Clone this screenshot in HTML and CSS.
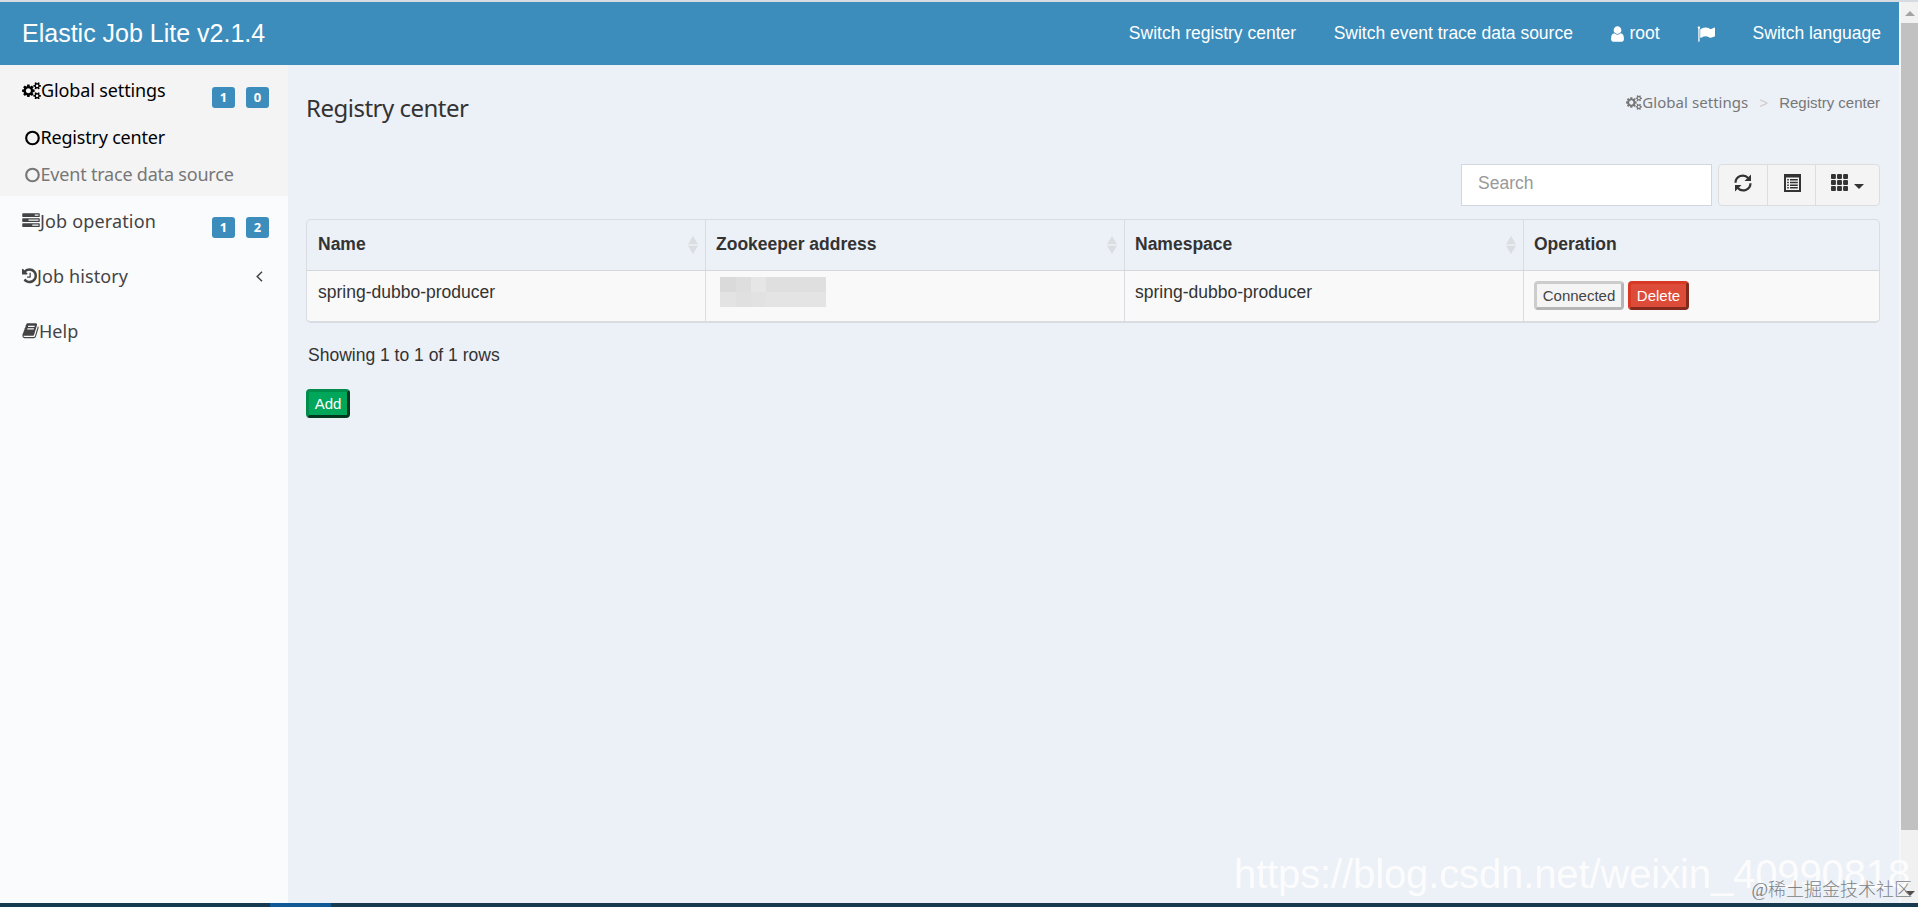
FILE: index.html
```
<!DOCTYPE html>
<html lang="en">
<head>
<meta charset="utf-8">
<title>Elastic Job Lite</title>
<link rel="stylesheet" href="styles.css">
</head>
<body>
<svg class="defs" width="0" height="0">
  <symbol id="cogs" viewBox="0 0 1920 1792"><path d="M896 896q0-106-75-181t-181-75-181 75-75 181 75 181 181 75 181-75 75-181zm768 512q0-52-38-90t-90-38-90 38-38 90q0 53 37.500 90.500t90.500 37.500 90.500-37.500 37.500-90.500zm0-1024q0-52-38-90t-90-38-90 38-38 90q0 53 37.500 90.500t90.500 37.500 90.500-37.500 37.500-90.500zm-384 421v185q0 10-7 19.500t-16 10.500l-155 24q-11 35-32 76 34 48 90 115 7 11 7 20 0 12-7 19-23 30-82.500 89.500t-78.500 59.500q-11 0-21-7l-115-90q-37 19-77 31-11 108-23 155-7 24-30 24h-186q-11 0-20-7.500t-10-17.500l-23-153q-34-10-75-31l-118 89q-7 7-20 7-11 0-21-8-144-133-144-160 0-9 7-19 10-14 41-53t47-61q-23-44-35-82l-152-24q-10-1-17-9.500t-7-19.500v-185q0-10 7-19.500t16-10.500l155-24q11-35 32-76-34-48-90-115-7-11-7-20 0-12 7-20 22-30 82-89t79-59q11 0 21 7l115 90q34-18 77-32 11-108 23-154 7-24 30-24h186q11 0 20 7.500t10 17.500l23 153q34 10 75 31l118-89q8-7 20-7 11 0 21 8 144 133 144 160 0 8-7 19-12 16-42 54t-45 60q23 48 34 82l152 23q10 2 17 10.500t7 19.500zm640 533v140q0 16-149 31-12 27-30 52 51 113 51 138 0 4-4 7-122 71-124 71-8 0-46-47t-52-68q-20 2-30 2t-30-2q-14 21-52 68t-46 47q-2 0-124-71-4-3-4-7 0-25 51-138-18-25-30-52-149-15-149-31v-140q0-16 149-31 13-29 30-52-51-113-51-138 0-4 4-7 4-2 35-20t59-34 30-16q8 0 46 46.500t52 67.500q20-2 30-2t30 2q51-71 92-112l6-2q4 0 124 70 4 3 4 7 0 25-51 138 17 23 30 52 149 15 149 31zm0-1024v140q0 16-149 31-12 27-30 52 51 113 51 138 0 4-4 7-122 71-124 71-8 0-46-47t-52-68q-20 2-30 2t-30-2q-14 21-52 68t-46 47q-2 0-124-71-4-3-4-7 0-25 51-138-18-25-30-52-149-15-149-31v-140q0-16 149-31 13-29 30-52-51-113-51-138 0-4 4-7 4-2 35-20t59-34 30-16q8 0 46 46.500t52 67.500q20-2 30-2t30 2q51-71 92-112l6-2q4 0 124 70 4 3 4 7 0 25-51 138 17 23 30 52 149 15 149 31z"/></symbol>
  <symbol id="tasks" viewBox="0 0 1792 1792"><path d="M1024 1408h640v-128h-640v128zm-384-512h1024v-128h-1024v128zm640-512h384v-128h-384v128zm512 832v256q0 26-19 45t-45 19h-1664q-26 0-45-19t-19-45v-256q0-26 19-45t45-19h1664q26 0 45 19t19 45zm0-512v256q0 26-19 45t-45 19h-1664q-26 0-45-19t-19-45v-256q0-26 19-45t45-19h1664q26 0 45 19t19 45zm0-512v256q0 26-19 45t-45 19h-1664q-26 0-45-19t-19-45v-256q0-26 19-45t45-19h1664q26 0 45 19t19 45z"/></symbol>
  <symbol id="history" viewBox="128 0 1536 1792"><path d="M1664 896q0 156-61 298t-164 245-245 164-298 61q-172 0-327-72.500t-264-204.500q-7-10-6.500-22.500t8.500-20.500l137-138q10-9 25-9 16 2 23 12 73 95 179 147t225 52q104 0 198.500-40.500t163.500-109.500 109.500-163.500 40.500-198.500-40.500-198.500-109.500-163.500-163.500-109.500-198.500-40.500q-98 0-188 35.500t-160 101.500l137 138q31 30 14 69-17 40-59 40h-448q-26 0-45-19t-19-45v-448q0-42 40-59 39-17 69 14l130 129q107-101 244.500-156.500t284.500-55.500q156 0 298 61t245 164 164 245 61 298zm-640-288v448q0 14-9 23t-23 9h-320q-14 0-23-9t-9-23v-64q0-14 9-23t23-9h224v-352q0-14 9-23t23-9h64q14 0 23 9t9 23z"/></symbol>
  <symbol id="book" viewBox="64 0 1664 1792"><path d="M1703 478q40 57 18 129l-275 906q-19 64-76.500 107.500t-122.500 43.500h-923q-77 0-148.500-53.500t-99.500-131.500q-24-67-2-127 0-4 3-27t4-37q1-8-3-21.500t-3-19.500q2-11 8-21t16.500-23.500 16.500-23.500q23-38 45-91.500t30-91.500q3-10 .5-30t-.5-28q3-11 17-28t17-23q21-36 42-92t25-90q1-9-2.500-32t.5-28q4-13 22-30.500t22-22.500q19-26 42.500-84.500t27.500-96.500q1-8-3-25.500t-2-26.500q2-8 9-18t18-23 17-21q8-12 16.500-30.500t15-35 16-36 19.500-32 26.500-23.500 36-11.500 47.500 5.500l-1 3q38-9 51-9h761q74 0 114 56t18 130l-274 906q-36 119-71.500 153.500t-128.500 34.500h-869q-27 0-38 15-11 16-1 43 24 70 144 70h923q29 0 56-15.500t35-41.500l300-987q7-22 5-57 38 15 59 43zm-1064 2q-4 13 2 22.500t20 9.500h608q13 0 25.500-9.500t16.500-22.500l21-64q4-13-2-22.500t-20-9.500h-608q-13 0-25.500 9.500t-16.500 22.500zm-83 256q-4 13 2 22.500t20 9.500h608q13 0 25.500-9.500t16.500-22.500l21-64q4-13-2-22.500t-20-9.500h-608q-13 0-25.500 9.500t-16.500 22.500z"/></symbol>
  <symbol id="circle" viewBox="0 0 16 16"><circle cx="7.700" cy="8" r="6.500" fill="none" stroke="currentColor" stroke-width="2.200"/></symbol>
  <symbol id="user" viewBox="256 0 1280 1792"><path d="M1536 1399q0 109-62.500 187t-150.500 78h-854q-88 0-150.500-78t-62.500-187q0-85 8.500-160.500t31.500-152 58.500-131 94-89 134.500-34.500q131 128 313 128t313-128q76 0 134.500 34.500t94 89 58.500 131 31.500 152 8.500 160.500zm-256-887q0 159-112.500 271.500t-271.500 112.500-271.500-112.500-112.500-271.500 112.500-271.500 271.500-112.500 271.500 112.500 112.500 271.500z"/></symbol>
  <symbol id="flag" viewBox="0 0 1792 1792"><path d="M320 256q0 72-64 110v1266q0 13-9.500 22.500t-22.500 9.500h-64q-13 0-22.500-9.500t-9.500-22.500v-1266q-64-38-64-110 0-53 37.500-90.500t90.500-37.500 90.500 37.500 37.500 90.500zm1472 64v763q0 25-12.500 38.500t-39.500 27.500q-215 116-369 116-61 0-123.500-22t-108.500-48-115.500-48-142.500-22q-192 0-464 146-17 9-33 9-26 0-45-19t-19-45v-742q0-32 31-55 21-14 79-43 236-120 421-120 107 0 200 29t219 88q38 19 88 19 54 0 117.500-21t110-47 88-47 54.500-21q26 0 45 19t19 45z"/></symbol>
  <symbol id="sorter" viewBox="0 0 10 18"><path d="M5 0l5 8.300H0zM0 9.700h10L5 18z"/></symbol>
</svg>
<div class="edge"></div>
<div class="app">
  <div class="page">
    <header class="topbar">
      <div class="brand">Elastic Job Lite v2.1.4</div>
      <nav class="topnav">
        <a>Switch registry center</a>
        <a>Switch event trace data source</a>
        <a class="account"><svg class="i-user"><use href="#user"/></svg>root</a>
        <a class="locale"><svg class="i-flag"><use href="#flag"/></svg></a>
        <a>Switch language</a>
      </nav>
    </header>
    <div class="columns">
      <aside class="sidebar">
        <div class="group active">
          <div class="item first"><svg class="i-cogs"><use href="#cogs"/></svg><span class="label l-global">Global settings</span><span class="badges"><b>1</b><b>0</b></span></div>
          <div class="sub current"><svg class="i-circle"><use href="#circle"/></svg><span class="label">Registry center</span></div>
          <div class="sub"><svg class="i-circle"><use href="#circle"/></svg><span class="label">Event trace data source</span></div>
        </div>
        <div class="item"><svg class="i-em"><use href="#tasks"/></svg><span class="label l-op">Job operation</span><span class="badges"><b>1</b><b>2</b></span></div>
        <div class="item"><svg class="i-history"><use href="#history"/></svg><span class="label l-hist">Job history</span><svg class="angle" viewBox="0 0 7 11"><path d="M6 .7L1.200 5.500 6 10.300" fill="none" stroke="currentColor" stroke-width="1.500"/></svg></div>
        <div class="item"><svg class="i-book"><use href="#book"/></svg><span class="label l-help">Help</span></div>
      </aside>
      <main class="content">
        <div class="heading">
          <h1>Registry center</h1>
          <div class="crumbs"><svg class="c-cogs"><use href="#cogs"/></svg><span class="c-global">Global settings</span><span class="sep">&gt;</span><span>Registry center</span></div>
        </div>
        <div class="toolbar">
          <div class="search">Search</div>
          <div class="tools">
            <div class="tool t1"><svg width="18" height="18" viewBox="0 0 18 18"><g fill="none" stroke="currentColor" stroke-width="2.200"><path d="M1.500 8.800A7.300 7.300 0 0 1 14.200 4"/><path d="M16.500 9.200A7.300 7.300 0 0 1 3.800 14"/></g><path d="M17 .5V7h-6.500zM1 17.500V11h6.500z"/></svg></div>
            <div class="tool t2"><svg width="17" height="18" viewBox="0 0 17 18"><path fill-rule="evenodd" d="M0 0h17v18H0zM2 3.500h13V16H2zM3.200 5h1.600v1.500H3.200zM6 5h7.800v1.500H6zM3.200 7.700h1.600v1.500H3.200zM6 7.700h7.800v1.500H6zM3.200 10.400h1.600v1.500H3.200zM6 10.400h7.800v1.500H6zM3.200 13.100h1.600v1.500H3.200zM6 13.100h7.800v1.500H6z"/></svg></div>
            <div class="tool t3"><svg width="17" height="17" viewBox="0 0 17 17"><g id="dots"><rect width="4.900" height="4.900" rx="1"/><rect x="6.050" width="4.900" height="4.900" rx="1"/><rect x="12.100" width="4.900" height="4.900" rx="1"/></g><use href="#dots" y="6.050"/><use href="#dots" y="12.100"/></svg><i class="caret"></i></div>
          </div>
        </div>
        <div class="table">
          <div class="row head">
            <div>Name<svg class="sort"><use href="#sorter"/></svg></div>
            <div>Zookeeper address<svg class="sort"><use href="#sorter"/></svg></div>
            <div>Namespace<svg class="sort"><use href="#sorter"/></svg></div>
            <div>Operation</div>
          </div>
          <div class="row body">
            <div>spring-dubbo-producer</div>
            <div><span class="mask"><i class="m1"></i><i class="m2"></i><i class="m3"></i><i class="m4"></i><i class="m5"></i><i class="m6"></i><i class="m7"></i><i class="m8"></i></span></div>
            <div>spring-dubbo-producer</div>
            <div class="ops"><button class="btn connected">Connected</button><button class="btn delete">Delete</button></div>
          </div>
        </div>
        <div class="summary">Showing 1 to 1 of 1 rows</div>
        <button class="btn add">Add</button>
      </main>
    </div>
  </div>
  <div class="scroll"><i class="up"></i><div class="thumb"></div><i class="down"></i></div>
</div>
<div class="taskbar"><i></i></div>
<div class="mark-url">https://blog.csdn.net/weixin_40990818</div>
<div class="mark-cn">@稀土掘金技术社区</div>
</body>
</html>
```
FILE: styles.css
```
* { box-sizing: border-box; }
body {
  margin: 0;
  width: 1918px;
  height: 907px;
  overflow: hidden;
  position: relative;
  display: flex;
  flex-direction: column;
  font: 17.5px/25px "Liberation Sans", Arial, sans-serif;
  color: #333;
  background: #ecf0f7;
}
svg { display: block; fill: currentColor; flex: none; }
.defs { position: absolute; }
.edge { height: 2px; background: #d5dbe0; }
.app { flex: 1; display: flex; min-height: 0; }
.page { width: 1899px; display: flex; flex-direction: column; }

.topbar {
  height: 63px;
  background: #3c8dbc;
  color: #fff;
  display: flex;
  align-items: center;
  justify-content: space-between;
  padding: 0 18px 0 22px;
}
.brand { font-size: 25px; }
.topnav { display: flex; align-items: center; gap: 37.5px; }
.topnav a { display: flex; align-items: center; white-space: nowrap; }
.i-user { width: 15px; height: 18px; margin-right: 4px; }
.i-flag { width: 18px; height: 18px; }

.columns { flex: 1; display: flex; }
.sidebar {
  width: 288px;
  background: #fafbfd;
  color: #444;
  font: 18px/25px "Noto Sans", "Open Sans", sans-serif;
}
.group { height: 131px; background: #f4f4f5; }
.active, .current { color: #000; }
.item { height: 55px; display: flex; align-items: center; padding: 0 19px 5px 22px; }
.item.first { padding-bottom: 4px; }
.sub { height: 37px; display: flex; align-items: center; padding: 0 0 2px 25px; color: #777; }
.sub.current { color: #000; }
.label { white-space: nowrap; letter-spacing: -.2px; }
.l-global { letter-spacing: -.12px; }
.l-op { letter-spacing: .15px; }
.l-hist { letter-spacing: .1px; }
.l-help { letter-spacing: 0; }
.i-cogs { width: 19px; height: 17.5px; }
.i-em { width: 18px; height: 17.5px; }
.i-history { width: 15px; height: 17.5px; }
.i-book { width: 17px; height: 17.5px; }
.i-circle { width: 15.5px; height: 16px; }
.badges { display: flex; gap: 11px; margin: 13px 0 0 auto; }
.badges b {
  width: 23px;
  height: 21px;
  border-radius: 3px;
  background: #3c8dbc;
  color: #fff;
  font-size: 13px;
  line-height: 20px;
  text-align: center;
}
.angle { width: 7px; height: 11px; margin: 1px 6px 0 auto; }

.content { flex: 1; padding: 0 19px 0 18px; }
.heading { height: 99px; display: flex; justify-content: space-between; }
h1 { margin: 29px 0 0; font: 24px/28px "Noto Sans", "Open Sans", sans-serif; letter-spacing: -.5px; }
.crumbs { display: flex; align-items: center; height: 25px; margin-top: 25px; font-size: 15px; color: #777; }
.c-cogs { width: 16px; height: 15px; }
.c-global { font-family: "Noto Sans", sans-serif; letter-spacing: .05px; }
.sep { color: #ccc; margin: 0 11px; }

.toolbar { height: 55px; display: flex; justify-content: flex-end; gap: 6px; }
.search { width: 251px; height: 42px; border: 1px solid #d2d6de; background: #fff; color: #999; padding: 6px 16px; }
.tools { display: flex; height: 42px; width: 162px; border: 1px solid #ddd; border-radius: 4px; background: #f4f4f4; color: #333; }
.tool { display: flex; padding-top: 9px; justify-content: center; }
.t1 { width: 48px; }
.t2 { width: 48px; padding-left: 2px; border-left: 1px solid #ddd; }
.t3 { flex: 1; border-left: 1px solid #ddd; }
.caret { margin: 10px 0 0 6px; width: 0; height: 0; border: 5px solid transparent; border-top-color: #333; border-bottom: 0; }

.table { height: 104px; border: 1px solid #d9dce0; border-bottom-width: 2px; border-radius: 5px; overflow: hidden; }
.row { display: grid; grid-template-columns: 398px 419px 399px 1fr; }
.row > div { padding: 0 10px 1px; display: flex; border-left: 1px solid #d9dce0; }
.row > div:first-child { border-left-color: transparent; }
.head { height: 51px; font-weight: 700; border-bottom: 1px solid #d4d8dc; }
.head > div { align-items: center; justify-content: space-between; }
.head .sort { width: 10px; height: 18px; color: #dadee1; margin-right: -3px; }
.body { height: 50px; background: #f9f9f9; }
.body > div { padding-top: 9px; }
.row .ops { padding-top: 10px; gap: 4px; }
.mask { width: 106px; height: 30px; margin: -3px 0 0 4px; display: grid; grid-template: 15px 15px / 16px 15px 15px 60px; }
.m1 { background: #dadada; } .m2 { background: #dedede; } .m3 { background: #e6e6e6; } .m4 { background: #dfdfdf; }
.m5 { background: #e3e3e3; } .m6 { background: #e0e0e0; } .m7 { background: #e2e2e2; } .m8 { background: #e4e4e4; }

.btn { font: 15px/22px "Liberation Sans", Arial, sans-serif; height: 29px; padding: 0; border-width: 3px; border-style: solid; border-radius: 4px; }
.connected { width: 90px; background: #f4f4f4; color: #444; border-color: #ccc #b5b5b5 #b5b5b5 #ccc; }
.delete { width: 61px; background: #dd4b39; color: #fff; border-color: #d73925 #84291e #84291e #d73925; }
.summary { margin: 20px 0 21px 2px; height: 25px; }
.add { width: 44px; background: #00a65a; color: #fff; border-color: #008d4c #00391f #00391f #008d4c; display: block; }

.scroll { width: 19px; border-left: 2px solid #f4f6f8; background: #f1f1f1; display: flex; flex-direction: column; }
.up { margin: 9px 0 7px 4px; width: 0; height: 0; border: 5px solid transparent; border-bottom-color: #a3a3a3; border-top: 0; }
.thumb { height: 807px; background: #c1c1c1; }
.down { margin: 61px 0 0 4px; width: 0; height: 0; border: 5px solid transparent; border-top-color: #505050; border-bottom: 0; }
.taskbar { height: 4px; background: #173a50; padding-left: 270px; }
.taskbar i { display: block; width: 61px; height: 4px; background: #0f5996; }

.mark-url { position: absolute; left: 1234px; top: 849px; font-size: 40px; line-height: 50px; letter-spacing: -.12px; color: rgba(255, 255, 255, .85); white-space: nowrap; }
.mark-cn { position: absolute; right: 6px; top: 878px; font: 300 18px/25px "Liberation Serif", "Noto Sans CJK SC", sans-serif; color: #808285; white-space: nowrap; }
```
